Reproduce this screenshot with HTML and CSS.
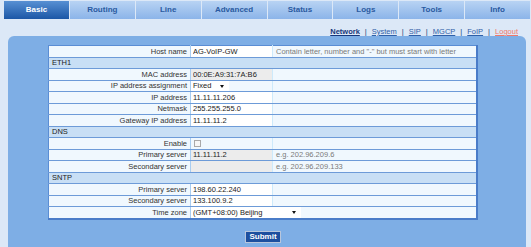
FILE: index.html
```html
<!DOCTYPE html>
<html>
<head>
    <title>Basic - Network</title>
    <link rel="stylesheet" href="styles.css">
</head>
<body>
    <div class="tabs">
        <a class="tab active" href="#">Basic</a>
        <a class="tab" href="#">Routing</a>
        <a class="tab" href="#">Line</a>
        <a class="tab" href="#">Advanced</a>
        <a class="tab" href="#">Status</a>
        <a class="tab" href="#">Logs</a>
        <a class="tab" href="#">Tools</a>
        <a class="tab" href="#">Info</a>
    </div>

    <div class="subnav">
        <a class="current" href="#">Network</a>
        <span class="sep">|</span>
        <a href="#">System</a>
        <span class="sep">|</span>
        <a href="#">SIP</a>
        <span class="sep">|</span>
        <a href="#">MGCP</a>
        <span class="sep">|</span>
        <a href="#">FoIP</a>
        <span class="sep">|</span>
        <a class="logout" href="#">Logout</a>
    </div>

    <div class="panel">
        <form class="form">
            <table class="cfg">
                <colgroup>
                    <col class="c-lbl">
                    <col class="c-val">
                    <col class="c-hint">
                </colgroup>
                <tr>
                    <td class="lbl">Host name</td>
                    <td class="val"><input type="text" value="AG-VoIP-GW"></td>
                    <td class="hint">Contain letter, number and "-" but must start with letter</td>
                </tr>
                <tr class="sec"><td colspan="3">ETH1</td></tr>
                <tr>
                    <td class="lbl">MAC address</td>
                    <td class="val"><input type="text" class="ro" value="00:0E:A9:31:7A:B6" readonly></td>
                    <td class="hint"></td>
                </tr>
                <tr>
                    <td class="lbl">IP address assignment</td>
                    <td class="val">
                        <span class="sel sel-short"><select><option>Fixed</option><option>DHCP</option></select></span>
                    </td>
                    <td class="hint"></td>
                </tr>
                <tr>
                    <td class="lbl">IP address</td>
                    <td class="val"><input type="text" value="11.11.11.206"></td>
                    <td class="hint"></td>
                </tr>
                <tr>
                    <td class="lbl">Netmask</td>
                    <td class="val"><input type="text" value="255.255.255.0"></td>
                    <td class="hint"></td>
                </tr>
                <tr>
                    <td class="lbl">Gateway IP address</td>
                    <td class="val"><input type="text" value="11.11.11.2"></td>
                    <td class="hint"></td>
                </tr>
                <tr class="sec"><td colspan="3">DNS</td></tr>
                <tr>
                    <td class="lbl">Enable</td>
                    <td class="val"><input type="checkbox" class="chk"></td>
                    <td class="hint"></td>
                </tr>
                <tr>
                    <td class="lbl">Primary server</td>
                    <td class="val"><input type="text" class="ro" value="11.11.11.2" disabled></td>
                    <td class="hint">e.g. 202.96.209.6</td>
                </tr>
                <tr>
                    <td class="lbl">Secondary server</td>
                    <td class="val"><input type="text" class="ro" value="" disabled></td>
                    <td class="hint">e.g. 202.96.209.133</td>
                </tr>
                <tr class="sec"><td colspan="3">SNTP</td></tr>
                <tr>
                    <td class="lbl">Primary server</td>
                    <td class="val"><input type="text" value="198.60.22.240"></td>
                    <td class="hint"></td>
                </tr>
                <tr>
                    <td class="lbl">Secondary server</td>
                    <td class="val"><input type="text" value="133.100.9.2"></td>
                    <td class="hint"></td>
                </tr>
                <tr>
                    <td class="lbl">Time zone</td>
                    <td class="val wide" colspan="2">
                        <span class="sel sel-long"><select><option>(GMT+08:00) Beijing</option></select></span>
                    </td>
                </tr>
            </table>
            <div class="actions">
                <button type="submit">Submit</button>
            </div>
        </form>
    </div>
</body>
</html>
```

FILE: styles.css
```css
body {
    margin: 0;
    background-color: #dce8f7;
    font-family: "Liberation Sans", Arial, sans-serif;
    font-size: 7.5px;
    color: #333;
}

/* top tabs */
.tabs {
    display: flex;
    gap: 1px;
    padding: 1px 1px 0 4px;
}

.tab {
    flex: 1;
    height: 18px;
    line-height: 18px;
    text-align: center;
    font-size: 8px;
    font-weight: bold;
    color: #2a5aa0;
    text-decoration: none;
    background: linear-gradient(#b8d3f3, #8bb4e9);
}

.tab.active {
    color: #fff;
    background: linear-gradient(#5790d3, #1c57a6);
}

/* sub navigation */
.subnav {
    display: flex;
    justify-content: flex-end;
    gap: 5px;
    height: 17px;
    box-sizing: border-box;
    padding: 9px 13px 0 0;
    line-height: 8px;
    font-size: 7.5px;
}

.subnav a {
    color: #3060a8;
}

.subnav a.current {
    color: #16367a;
    font-weight: bold;
}

.subnav a.logout {
    color: #f0786a;
}

.subnav .sep {
    color: #16367a;
}

/* main panel */
.panel {
    margin: 0 5px 0 8px;
    min-height: 211px;
    box-sizing: border-box;
    padding: 9px 0 0 40px;
    background-color: #7eaee5;
    border-radius: 6px 6px 0 0;
}

.form {
    width: 430px;
}

.cfg {
    width: 430px;
    table-layout: fixed;
    border-collapse: collapse;
    background-color: #f0f8fe;
    border-left: 1px solid #5a8dd4;
    border-top: 1px solid #5a8dd4;
    border-right: 2px solid #4a7cc8;
    border-bottom: 2px solid #4a7cc8;
}

.c-lbl { width: 142px; }
.c-val { width: 82px; }

.cfg td {
    height: 10.5px;
    padding: 0 3px;
    border-bottom: 1px solid #6d9bd8;
    white-space: nowrap;
    overflow: hidden;
}

.cfg .lbl {
    text-align: right;
    border-right: 1px solid #a8cdf1;
}

.cfg .val {
    padding: 0;
    border-right: 1px solid #cdeafb;
}

.cfg .val.wide {
    border-right: none;
}

.cfg .hint {
    color: #7a7a7a;
}

.cfg .sec td {
    background-color: #c8dff5;
    color: #222;
}

/* fields */
.cfg input[type="text"] {
    display: block;
    width: 100%;
    height: 10.5px;
    box-sizing: border-box;
    margin: 0;
    padding: 0 2px;
    border: none;
    background-color: #fff;
    font: inherit;
    color: #222;
}

.cfg input.ro {
    background-color: #ececec;
}

.chk {
    appearance: none;
    display: block;
    width: 7px;
    height: 7px;
    margin: 0 0 0 3px;
    border: 1px solid #a9a9a9;
    background-color: #f6f6f6;
}

.sel {
    position: relative;
    display: block;
    height: 10.5px;
    background-color: #fff;
}

.sel-short { width: 38px; }
.sel-long { width: 110px; }

.sel select {
    appearance: none;
    display: block;
    width: 100%;
    height: 10.5px;
    margin: 0;
    padding: 0 2px;
    border: none;
    background: transparent;
    font: inherit;
    color: #222;
}

.sel::after {
    content: "";
    position: absolute;
    right: 5px;
    top: 4px;
    border-left: 2px solid transparent;
    border-right: 2px solid transparent;
    border-top: 3px solid #111;
}

/* submit */
.actions {
    padding-top: 11px;
    text-align: center;
}

.actions button {
    width: 36px;
    height: 12px;
    padding: 0;
    border: 1px solid #b8c6dc;
    background-color: #1d4f9f;
    color: #fff;
    font-family: "Liberation Sans", Arial, sans-serif;
    font-size: 8px;
    font-weight: bold;
    cursor: pointer;
}
```
